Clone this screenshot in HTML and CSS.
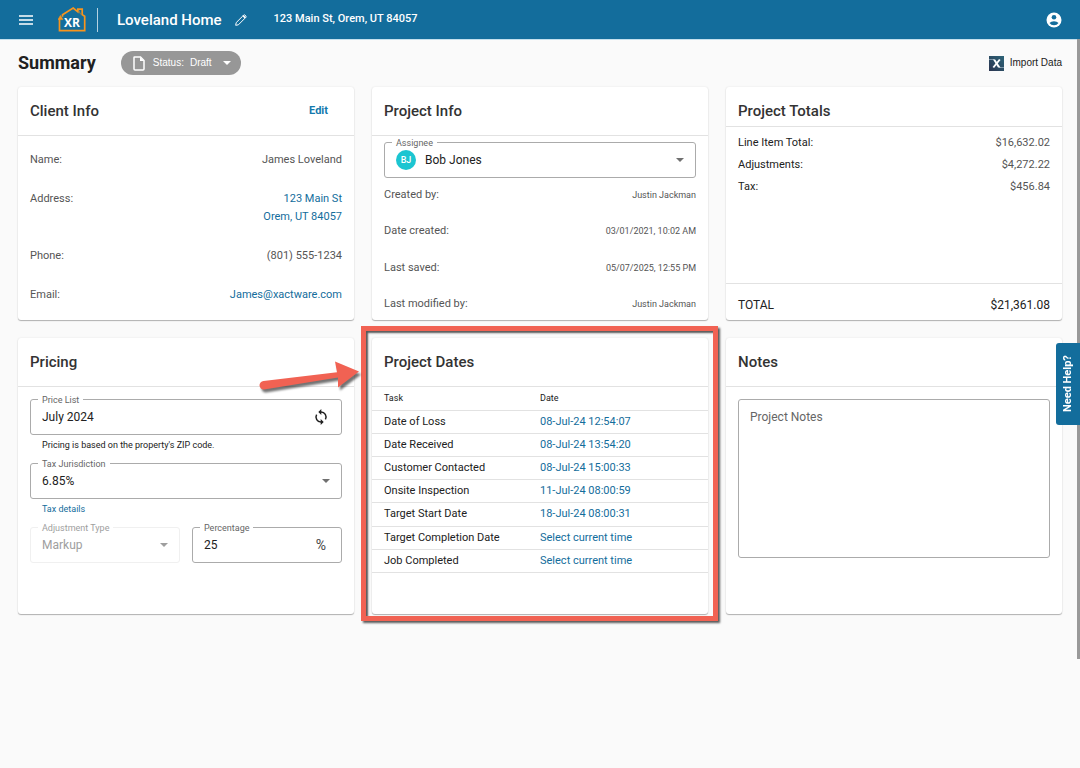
FILE: index.html
```html
<!DOCTYPE html>
<html lang="en">
<head>
<meta charset="utf-8">
<meta name="viewport" content="width=device-width, initial-scale=1">
<title>Loveland Home - Summary</title>
<link rel="stylesheet" href="styles.css">
</head>
<body>
<header class="topbar">
  <button class="icon-btn menu-btn" type="button" aria-label="Menu">
    <svg width="14" height="10" viewBox="0 0 14 10"><path d="M0 1h14M0 5h14M0 9h14" stroke="currentColor" stroke-width="1.5"/></svg>
  </button>
  <a class="logo" href="#" aria-label="XR home">
    <svg width="28" height="25" viewBox="0 0 28 25">
      <path d="M1.500 12v11.700h25.200V9.300l-2.500-1.700V2.200h-4.400v2.600L15.200 1 4.500 7.700v2" fill="none" stroke="#f7941d" stroke-width="1.700"/>
      <path d="M0 12.600l2.400-4.200 2.500 4.200zM20 2l2.600 5.300" fill="#f7941d" stroke="#f7941d" stroke-width=".6"/>
      <text x="14" y="19.500" text-anchor="middle" class="logo-text">XR</text>
    </svg>
  </a>
  <span class="divider"></span>
  <span class="project-name">Loveland Home</span>
  <button class="icon-btn edit-name" type="button" aria-label="Edit project name">
    <svg width="12" height="12" viewBox="0 0 12 12" fill="none" stroke="currentColor" stroke-width="1" stroke-linejoin="round"><path d="M.7 11.300l.5-2.700 6.600-6.600 2.200 2.200-6.600 6.600zM7.800 2l1-1q.5-.4 1 0l1.200 1.200q.4.500 0 1l-1 1"/><path d="M8.300 1.700l2 2" stroke-width="1.500"/></svg>
  </button>
  <span class="project-address">123 Main St, Orem, UT 84057</span>
  <button class="icon-btn account" type="button" aria-label="Account">
    <svg width="16" height="16" viewBox="0 0 16 16"><circle cx="8" cy="8" r="7.500" fill="#fff"/><circle cx="8" cy="5.200" r="2.300" fill="#136d9c"/><path d="M3.500 11.100Q5 9.200 8 9.200t4.500 1.900Q11 13.300 8 13.300t-4.500-2.200z" fill="#136d9c"/></svg>
  </button>
</header>

<main class="page">
  <div class="page-head">
    <h1 class="page-title">Summary</h1>
    <button class="status" type="button">
      <svg width="12" height="15" viewBox="0 0 12 15"><path d="M1.500.9h6L11 4.500v8.600q0 1-1 1H2q-1 0-1-1V1.400q0-.5.500-.5z" fill="none" stroke="#fff" stroke-width="1.500"/><path d="M7 1v4h4z" fill="#fff"/></svg>
      <span>Status:</span><span>Draft</span>
      <svg class="status-caret" width="8" height="4" viewBox="0 0 8 4"><path d="M0 0h8L4 4z" fill="#fff"/></svg>
    </button>
    <button class="import" type="button">
      <svg width="15" height="15" viewBox="0 0 15 15"><defs><linearGradient id="xg" x1="0" y1="1" x2="1" y2="0"><stop offset="0" stop-color="#2b3550"/><stop offset="1" stop-color="#2c6478"/></linearGradient></defs><rect width="15" height="15" fill="url(#xg)"/><path d="M0 3.500h5.500M10 11.500h5" stroke="#8fa6b8" stroke-width=".8"/><path d="M4 3.500h2.200L11.500 11.500H9z" fill="#fff"/><path d="M10.800 3.500L4.300 11.500" stroke="#fff" stroke-width="1.900"/></svg>
      Import Data
    </button>
  </div>

  <div class="cards">
    <section class="card">
      <div class="card-head"><h2>Client Info</h2><button class="edit" type="button">Edit</button></div>
      <dl class="facts client">
        <div><dt>Name:</dt><dd>James Loveland</dd></div>
        <div><dt>Address:</dt><dd><a href="#">123 Main St<br>Orem, UT 84057</a></dd></div>
        <div><dt>Phone:</dt><dd>(801) 555-1234</dd></div>
        <div><dt>Email:</dt><dd><a href="#">James@xactware.com</a></dd></div>
      </dl>
    </section>

    <section class="card">
      <div class="card-head"><h2>Project Info</h2></div>
      <div class="project-info">
        <div class="field">
          <label for="assignee">Assignee</label>
          <span class="avatar">BJ</span>
          <select id="assignee"><option>Bob Jones</option></select>
          <svg class="caret" width="8" height="4" viewBox="0 0 8 4"><path d="M0 0h8L4 4z"/></svg>
        </div>
        <dl class="facts project">
          <div><dt>Created by:</dt><dd>Justin Jackman</dd></div>
          <div><dt>Date created:</dt><dd>03/01/2021, 10:02 AM</dd></div>
          <div><dt>Last saved:</dt><dd>05/07/2025, 12:55 PM</dd></div>
          <div><dt>Last modified by:</dt><dd>Justin Jackman</dd></div>
        </dl>
      </div>
    </section>

    <section class="card">
      <div class="card-head compact"><h2>Project Totals</h2></div>
      <dl class="facts totals">
        <div><dt>Line Item Total:</dt><dd>$16,632.02</dd></div>
        <div><dt>Adjustments:</dt><dd>$4,272.22</dd></div>
        <div><dt>Tax:</dt><dd>$456.84</dd></div>
      </dl>
      <div class="grand-total"><span>TOTAL</span><span>$21,361.08</span></div>
    </section>

    <section class="card">
      <div class="card-head"><h2>Pricing</h2></div>
      <div class="form">
        <div class="field">
          <label for="price-list">Price List</label>
          <input id="price-list" type="text" value="July 2024">
          <button class="icon-btn sync" type="button" aria-label="Refresh price list">
            <svg width="14" height="16" viewBox="0 0 14 16"><path d="M7 3a5 5 0 0 1 4.400 7.400M7 13a5 5 0 0 1-4.400-7.400" fill="none" stroke="currentColor" stroke-width="1.500"/><path d="M7.300 0v6L4.300 3zM6.700 10v6l3-3z" fill="currentColor"/></svg>
          </button>
        </div>
        <p class="helper">Pricing is based on the property's ZIP code.</p>
        <div class="field">
          <label for="tax">Tax Jurisdiction</label>
          <select id="tax"><option>6.85%</option></select>
          <svg class="caret" width="8" height="4" viewBox="0 0 8 4"><path d="M0 0h8L4 4z"/></svg>
        </div>
        <p class="helper"><a href="#">Tax details</a></p>
        <div class="field-pair">
          <div class="field disabled">
            <label for="adjustment">Adjustment Type</label>
            <select id="adjustment" disabled><option>Markup</option></select>
            <svg class="caret" width="8" height="4" viewBox="0 0 8 4"><path d="M0 0h8L4 4z"/></svg>
          </div>
          <div class="field">
            <label for="percentage">Percentage</label>
            <input id="percentage" type="text" value="25">
            <span class="suffix">%</span>
          </div>
        </div>
      </div>
    </section>

    <section class="card highlighted">
      <div class="card-head"><h2>Project Dates</h2></div>
      <table class="dates">
        <thead><tr><th>Task</th><th>Date</th></tr></thead>
        <tbody>
          <tr><td>Date of Loss</td><td><a href="#">08-Jul-24 12:54:07</a></td></tr>
          <tr><td>Date Received</td><td><a href="#">08-Jul-24 13:54:20</a></td></tr>
          <tr><td>Customer Contacted</td><td><a href="#">08-Jul-24 15:00:33</a></td></tr>
          <tr><td>Onsite Inspection</td><td><a href="#">11-Jul-24 08:00:59</a></td></tr>
          <tr><td>Target Start Date</td><td><a href="#">18-Jul-24 08:00:31</a></td></tr>
          <tr><td>Target Completion Date</td><td><a href="#">Select current time</a></td></tr>
          <tr><td>Job Completed</td><td><a href="#">Select current time</a></td></tr>
        </tbody>
      </table>
      <div class="callout-box"></div>
      <svg class="callout-arrow" width="108" height="40" viewBox="0 0 108 40"><path d="M5.500 21L79 12.300 77 1.500 101 11.500 80 27.500 80 17.500 6 29.500A4.200 4.200 0 0 1 5.500 21z" fill="#f16253"/></svg>
    </section>

    <section class="card">
      <div class="card-head"><h2>Notes</h2></div>
      <div class="form"><textarea class="notes" placeholder="Project Notes" aria-label="Project Notes"></textarea></div>
    </section>
  </div>
</main>
<div class="scroll-thumb"></div>
<button class="help" type="button">Need Help?</button>
</body>
</html>
```
FILE: styles.css
```css
* { box-sizing: border-box; }
body {
  margin: 0;
  min-height: 100vh;
  background: #fafafa;
  color: #212121;
  font: 11px/18px Roboto, "Liberation Sans", sans-serif;
}
h1, h2, p, dl, dd { margin: 0; }
button, input, select, textarea { font: inherit; color: inherit; }
button { padding: 0; border: 0; background: none; cursor: pointer; }
a { color: #136d9c; text-decoration: none; }
svg { display: block; flex: none; }

.topbar {
  display: flex;
  align-items: center;
  height: 40px;
  padding: 0 18px 0 19px;
  background: #136d9c;
  border-bottom: 1px solid #c3e0ee;
  color: #fff;
}
.icon-btn { display: flex; }
.logo { margin: 0 11px 0 25px; }
.logo-text { font: 700 12px "Open Sans", sans-serif; fill: #fff; }
.divider { width: 1px; height: 24px; background: #b4d2e1; }
.project-name { margin-left: 19px; font-size: 15px; font-weight: 500; }
.edit-name { margin: 0 27px 0 13px; }
.project-address { font-weight: 500; line-height: 20px; padding-bottom: 2px; }
.account { margin-left: auto; }

.page { padding: 9px 18px 18px; }
.page-head { display: flex; align-items: center; height: 28px; margin-bottom: 10px; }
.page-title { font-size: 18px; line-height: 28px; font-weight: 700; }
.status {
  display: flex;
  align-items: center;
  gap: 6px;
  height: 24px;
  margin-left: 25px;
  padding: 0 10px 0 12px;
  border-radius: 12px;
  background: #979797;
  color: #fff;
  font-size: 10px;
  font-family: "Liberation Sans", sans-serif;
}
.status svg:first-child { margin-right: 2px; }
.status-caret { margin-left: 5px; }
.import {
  display: flex;
  align-items: center;
  gap: 6px;
  margin-left: auto;
  font-size: 10px;
  font-family: "Liberation Sans", sans-serif;
}

.cards {
  display: grid;
  grid-template-columns: repeat(3, minmax(0, 1fr));
  grid-template-rows: auto minmax(276px, auto);
  gap: 18px;
}
.card {
  display: flex;
  flex-direction: column;
  background: #fff;
  border-radius: 3px;
  box-shadow: 0 1px 1px rgba(0, 0, 0, .28), 0 0 2px rgba(0, 0, 0, .1);
}
.card-head {
  display: flex;
  align-items: center;
  justify-content: space-between;
  padding: 12px;
  border-bottom: 1px solid #e2e2e2;
}
.card-head.compact { padding-bottom: 3px; }
h2 { font-size: 15px; line-height: 24px; font-weight: 500; color: #333; }
.edit { padding: 0 14px; color: #1279ad; font-weight: 700; }

.facts { display: flex; flex-direction: column; color: #555; }
.facts > div { display: flex; justify-content: space-between; }
.facts dd { text-align: right; }
.client { gap: 21px; padding: 15px 12px 16px; }
.project-info { display: flex; flex-direction: column; flex: 1; padding: 6px 12px 7px; }
.project { flex: 1; justify-content: space-between; margin-top: 8px; }
.project dd { font-size: 9px; }
.totals { padding: 5px 12px; line-height: 22px; }
.totals dt { color: #212121; }
.grand-total {
  display: flex;
  justify-content: space-between;
  margin-top: auto;
  padding: 12px 12px 6px;
  border-top: 1px solid #e2e2e2;
  font-size: 12px;
}

.field {
  position: relative;
  display: flex;
  align-items: center;
  height: 36px;
  padding: 0 11px;
  border: 1px solid #ababab;
  border-radius: 3px;
}
.field label {
  position: absolute;
  top: -6px;
  left: 7px;
  padding: 0 4px;
  background: #fff;
  color: #666;
  font-size: 9px;
  line-height: 12px;
}
.field input, .field select {
  flex: 1;
  min-width: 0;
  padding: 0;
  border: 0;
  outline: 0;
  background: none;
  appearance: none;
  font-size: 12px;
  line-height: 18px;
}
.field select:disabled { color: inherit; opacity: 1; }
.caret { fill: #707070; }
.avatar {
  width: 20px;
  height: 20px;
  margin-right: 9px;
  border-radius: 50%;
  background: #1cc5d1;
  color: #fff;
  font-size: 9px;
  font-weight: 500;
  line-height: 20px;
  text-align: center;
}
.field.disabled { border-color: #f0f0f0; color: #9e9e9e; }
.field.disabled label { color: #9e9e9e; }
.field.disabled .caret { fill: #9e9e9e; }
.sync { margin-right: 2px; }
.suffix { margin-right: 4px; color: #444; font-size: 14px; }
.form { padding: 12px; }
.helper { margin: 1px 12px 9px; font-size: 9px; line-height: 18px; }
.field-pair { display: grid; grid-template-columns: repeat(2, minmax(0, 1fr)); gap: 12px; }

.dates { width: 100%; height: 186px; table-layout: fixed; border-collapse: collapse; }
.dates th, .dates td {
  height: 23px;
  padding: 0 12px;
  border-bottom: 1px solid #e2e2e2;
  font-weight: 400;
  text-align: left;
  line-height: 18px;
}
.dates th { font-size: 9px; }
.dates tr > :last-child { padding-left: 0; }
.notes {
  display: block;
  width: 100%;
  height: 159px;
  padding: 8px 11px;
  border: 1px solid #ababab;
  border-radius: 3px;
  background: #fff;
  outline: 0;
  resize: none;
  font-size: 12px;
}
.notes::placeholder { color: #666; }

.highlighted { position: relative; }
.callout-box {
  position: absolute;
  inset: -12px -10px -7px -11px;
  border: 5px solid #f16253;
  box-shadow: 2px 2px 2px rgba(0, 0, 0, .65), inset 2px 2px 2px rgba(0, 0, 0, .65);
  pointer-events: none;
}
.callout-arrow {
  position: absolute;
  top: 22px;
  left: -114px;
  filter: drop-shadow(2px 3px 1px rgba(0, 0, 0, .55));
}

.scroll-thumb {
  position: absolute;
  top: 39px;
  right: 0;
  width: 3px;
  height: 620px;
  background: #999;
}
.help {
  position: fixed;
  top: 343px;
  right: 0;
  width: 24px;
  height: 82px;
  border-radius: 0 3px 3px 0;
  background: #136d9c;
  color: #fff;
  font-weight: 700;
  writing-mode: vertical-rl;
  transform: rotate(180deg);
}
```
